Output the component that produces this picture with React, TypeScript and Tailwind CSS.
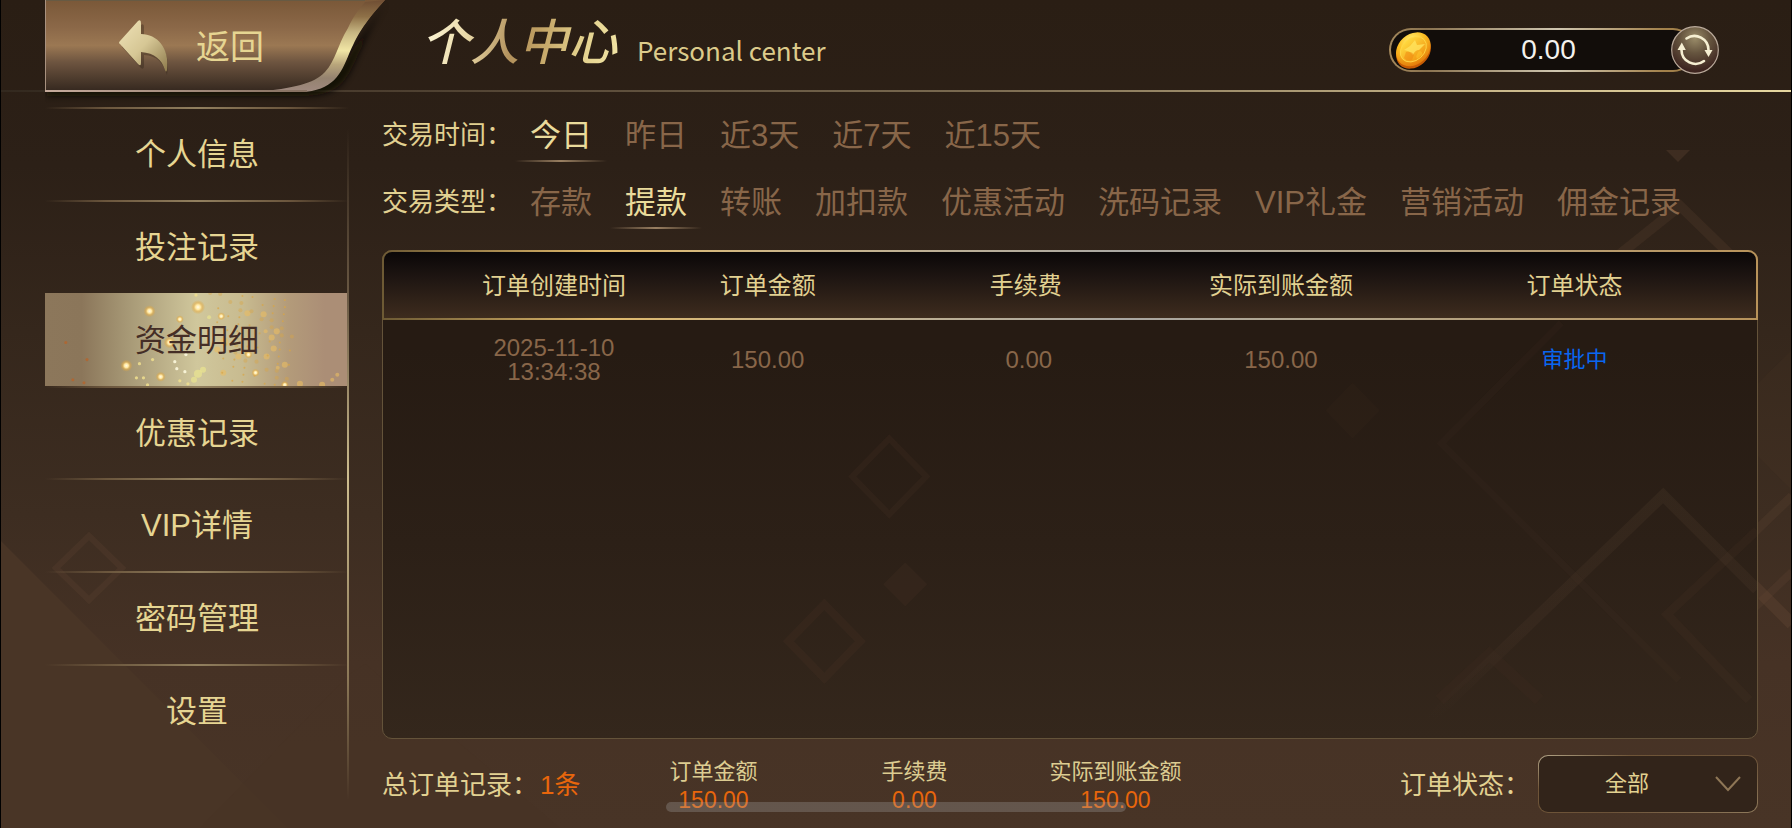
import React, { useState } from "react";

const CJK = "font-['Liberation_Sans','Noto_Sans_CJK_SC',sans-serif]";

const MENU = ["个人信息", "投注记录", "资金明细", "优惠记录", "VIP详情", "密码管理", "设置"];
const PERIODS = ["今日", "昨日", "近3天", "近7天", "近15天"];
const TYPES = ["存款", "提款", "转账", "加扣款", "优惠活动", "洗码记录", "VIP礼金", "营销活动", "佣金记录"];
const TOTALS = [
  { label: "订单金额", value: "150.00" },
  { label: "手续费", value: "0.00" },
  { label: "实际到账金额", value: "150.00" },
];

function Backdrop() {
  return (
    <svg
      className="pointer-events-none absolute inset-0 h-full w-full"
      viewBox="0 0 1792 828"
      preserveAspectRatio="xMidYMid slice"
      aria-hidden="true"
    >
      <path d="M0 540 L170 710 L288 828 H0 Z" fill="#493526" />
      <path d="M365 664 L350 674 L200 828 H560 Z" fill="#493526" opacity="0.35" />
      <g fill="none" stroke="#6b4b38" strokeOpacity="0.2">
        <path d="M89 536 L122 568 L89 600 L56 568 Z" strokeWidth="6" />
        <path d="M1600 270 L1680 206 L1748 272" strokeWidth="10" />
        <path d="M1664 496 L1792 624" strokeWidth="12" strokeOpacity="0.3" />
        <path d="M1792 496 L1740 546" strokeWidth="9" />
        <path d="M1792 572 L1752 610" strokeWidth="8" />
      </g>
      <g fill="#6b4b38">
        <path d="M1666 150 H1690 L1678 162 Z" opacity="0.3" />
        <path d="M1792 350 L1720 420 L1792 490 Z" opacity="0.08" />
      </g>
    </svg>
  );
}

function Watermark() {
  return (
    <svg className="pointer-events-none absolute inset-0 h-full w-full" viewBox="0 0 1376 488" preserveAspectRatio="xMidYMid slice" aria-hidden="true">
      <defs>
        <linearGradient id="peak" x1="0" y1="245" x2="0" y2="470" gradientUnits="userSpaceOnUse">
          <stop offset="0" stopColor="#5f4a35" stopOpacity="0.18" />
          <stop offset="0.6" stopColor="#5f4535" stopOpacity="0.14" />
          <stop offset="1" stopColor="#5f4535" stopOpacity="0" />
        </linearGradient>
      </defs>
      <path d="M1048 470 L1282 245 L1376 339" fill="none" stroke="url(#peak)" strokeWidth="11" />
      <g fill="none" stroke="#5f4535" strokeOpacity="0.12">
        <path d="M507 188 L544 226 L507 264 L470 226 Z" strokeWidth="6" />
        <path d="M442 354 L478 391 L442 428 L406 391 Z" strokeWidth="8" />
        <path d="M1376 280 L1286 364 L1368 450" strokeWidth="9" strokeOpacity="0.1" />
        <path d="M1180 72 L1060 193 L1298 430" strokeWidth="7" strokeOpacity="0.08" />
        <path d="M1058 450 L1108 404 L1158 450" strokeWidth="12" strokeOpacity="0.06" />
      </g>
      <g fill="#5f4535">
        <path d="M523 312 L545 334 L523 356 L501 334 Z" opacity="0.12" />
        <path d="M971 132 L998 160 L971 188 L944 160 Z" opacity="0.06" />
      </g>
    </svg>
  );
}

function BackButton() {
  return (
    <button type="button" className="relative flex h-[92px] w-[340px] shrink-0 items-center text-[#e6d592]">
      <svg className="absolute left-0 top-0 h-[104px] w-[344px]" viewBox="0 0 344 104" aria-hidden="true">
        <defs>
          <linearGradient id="plate" x1="0" y1="0" x2="0" y2="1">
            <stop offset="0" stopColor="#7a5838" />
            <stop offset="0.3" stopColor="#8b6848" />
            <stop offset="0.5" stopColor="#9b7853" />
            <stop offset="0.68" stopColor="#6e5540" />
            <stop offset="1" stopColor="#35281f" />
          </linearGradient>
          <linearGradient id="ribbon" x1="0" y1="0" x2="0" y2="1">
            <stop offset="0" stopColor="#6f4d33" />
            <stop offset="0.18" stopColor="#8e7047" />
            <stop offset="0.35" stopColor="#c6b581" />
            <stop offset="0.55" stopColor="#f1e6a5" />
            <stop offset="0.7" stopColor="#b9a67b" />
            <stop offset="0.85" stopColor="#94826f" />
            <stop offset="1" stopColor="#a08a80" />
          </linearGradient>
          <linearGradient id="rim" x1="0" y1="0" x2="1" y2="0">
            <stop offset="0" stopColor="#c5aa9c" />
            <stop offset="1" stopColor="#857060" />
          </linearGradient>
          <filter id="soft" x="-5%" y="-10%" width="115%" height="130%">
            <feGaussianBlur stdDeviation="3" />
          </filter>
        </defs>
        <path d="M2 80 H262 C292 78 300 64 309 48 L342 2 C322 32 318 46 306 70 C296 90 282 96 258 96 H2 Z" fill="#0d0806" opacity="0.8" filter="url(#soft)" />
        <path d="M0 0 H340 C318 24 310 38 302 56 C294 76 286 88 258 91 H0 Z" fill="url(#plate)" />
        <path d="M340 0 C318 24 312 36 304 54 C296 74 288 91 256 92 H210 C250 88 268 84 280 72 C291 60 292 46 303 28 C308 17 314 9 320 2 Z" fill="url(#ribbon)" />
        <rect x="0" y="0" width="320" height="1" fill="#675a43" />
        <rect x="0" y="0" width="1" height="92" fill="#a8917f" />
        <rect x="0" y="90" width="262" height="2" fill="url(#rim)" />
      </svg>
      <svg className="relative ml-[72px] mt-1 h-[60px] w-[54px]" viewBox="0 0 54 60" aria-hidden="true">
        <defs>
          <linearGradient id="arrow" x1="0" y1="0" x2="1" y2="1">
            <stop offset="0" stopColor="#efe3b8" />
            <stop offset="0.5" stopColor="#d6c795" />
            <stop offset="1" stopColor="#8e7a4c" />
          </linearGradient>
        </defs>
        <path d="M5 29 L24 7 Q27 5 27 9 V20 C44 20 54 36 50 57 C46 44 40 38 27 37 V48 Q27 52 24 50 Z" fill="#2c1f14" opacity="0.35" />
        <path d="M3 26 Q1 25 3 23 L21 3 Q24 1 24 5 V16 C40 16 53 30 50 52 Q49 55 48 52 C45 42 38 35 24 34 V45 Q24 49 21 46 Z" fill="url(#arrow)" />
      </svg>
      <span className="relative ml-[25px] pt-0.5 text-[34px] leading-10">返回</span>
    </button>
  );
}

function Coin() {
  return (
    <svg className="ml-1 size-[38px] shrink-0" viewBox="0 0 38 38" aria-hidden="true">
      <defs>
        <radialGradient id="coin" cx="0.6" cy="0.25" r="0.8">
          <stop offset="0" stopColor="#fff27a" />
          <stop offset="0.45" stopColor="#fcc024" />
          <stop offset="1" stopColor="#e27608" />
        </radialGradient>
        <linearGradient id="coinFace" x1="0" y1="0" x2="0" y2="1">
          <stop offset="0" stopColor="#ffd93f" />
          <stop offset="1" stopColor="#f29a14" />
        </linearGradient>
      </defs>
      <g transform="rotate(-42 19 19)">
        <ellipse cx="17.5" cy="20" rx="19" ry="15" fill="#c65b05" />
        <ellipse cx="19" cy="18" rx="19" ry="15" fill="url(#coin)" />
        <ellipse cx="19" cy="18" rx="14.5" ry="11" fill="url(#coinFace)" stroke="#ffd94a" strokeWidth="0.8" />
      </g>
      <path d="M20 9 L22 14 L30 13 L24 19 Q20 19 18 24 Q15 20 9 19 L15 15 Z" fill="#ffe45e" opacity="0.8" />
      <path d="M11 21 Q17 20 19 24 L17 29 Q12 31 9 27 Z" fill="#ee7a0a" opacity="0.4" />
      <path d="M24 20 Q28 20 27 24 L22 28 Q20 25 24 20 Z" fill="#ffca2e" opacity="0.5" />
    </svg>
  );
}

function RefreshIcon() {
  return (
    <svg className="size-12" viewBox="0 0 48 48" aria-hidden="true">
      <defs>
        <radialGradient id="knob" cx="0.5" cy="0.25" r="0.7">
          <stop offset="0" stopColor="#9a8c69" />
          <stop offset="0.45" stopColor="#66553f" />
          <stop offset="1" stopColor="#3d241f" />
        </radialGradient>
      </defs>
      <circle cx="24" cy="24" r="23.3" fill="url(#knob)" stroke="#b9a99a" strokeWidth="1.2" />
      <g fill="none" stroke="#f6efd2" strokeWidth="2.6" strokeLinecap="round">
        <path d="M15.5 12.5 A14 14 0 0 1 37.5 24" />
        <path d="M33 35 A14 14 0 0 1 10.5 24" />
      </g>
      <path d="M33.5 24 H41.5 L37.5 31 Z" fill="#f6efd2" />
      <path d="M6.5 24 H14.8 L10.8 16.5 Z" fill="#f6efd2" />
    </svg>
  );
}

const GLOWS = [
  [105, 18, 6], [153, 14, 7], [82, 72, 6], [135, 26, 4], [176, 23, 4],
  [116, 83, 5], [210, 79, 4], [239, 91, 4], [125, 49, 6], [203, 61, 4],
];
const BLURS = [
  [202, 20, 3], [218, 21, 3], [231, 38, 3], [226, 44, 3], [220, 38, 2], [153, 80, 4], [149, 86, 3], [158, 76, 3],
  [239, 71, 3], [254, 90, 3], [276, 91, 3], [286, 86, 2], [291, 81, 2], [178, 79, 3], [164, 24, 2], [228, 55, 3],
  [221, 63, 3], [193, 63, 3], [179, 48, 4], [172, 56, 3], [232, 74, 2],
];
const SPECKS = Array.from({ length: 64 }, (_, i) => [
  165 + ((i * 37) % 76) + Math.floor(i / 6),
  (i * 53) % 92,
  i % 3 === 0 ? 2 : 1,
]);
const EMBERS = [[22, 49], [43, 66], [29, 86], [40, 89]];
const LIGHTS = [[132, 75], [140, 78], [141, 61], [130, 68], [108, 66], [95, 70], [99, 84], [103, 91], [135, 87], [143, 90], [151, 2], [92, 84]];

function Sparkles() {
  return (
    <svg className="absolute inset-0 h-full w-full" viewBox="0 0 304 92" preserveAspectRatio="xMidYMid slice" aria-hidden="true">
      <defs>
        <radialGradient id="glow">
          <stop offset="0" stopColor="#fffbe8" />
          <stop offset="0.35" stopColor="#ffe7a0" />
          <stop offset="0.65" stopColor="#e8b04a" stopOpacity="0.55" />
          <stop offset="1" stopColor="#e0a030" stopOpacity="0" />
        </radialGradient>
      </defs>
      {BLURS.map(([x, y, r], i) => (
        <circle key={i} cx={x} cy={y} r={r} fill={x < 170 ? "#efe98d" : "#e9bd62"} opacity="0.6" />
      ))}
      {SPECKS.map(([x, y, r], i) => (
        <circle key={i} cx={x} cy={y} r={r} fill="#d9a544" opacity={r === 2 ? 0.4 : 0.7} />
      ))}
      {LIGHTS.map(([x, y], i) => (
        <circle key={i} cx={x} cy={y} r="1.6" fill={i < 4 ? "#fffbe0" : "#f0df8e"} opacity="0.85" />
      ))}
      {EMBERS.map(([x, y], i) => (
        <circle key={i} cx={x} cy={y} r="1.5" fill="#b5642c" opacity="0.8" />
      ))}
      {GLOWS.map(([x, y, r], i) => (
        <circle key={i} cx={x} cy={y} r={r} fill="url(#glow)" />
      ))}
    </svg>
  );
}

function FilterRow({ label, options, initial }: { label: string; options: string[]; initial: string }) {
  const [active, setActive] = useState(initial);
  return (
    <div className="flex items-center">
      <span className="shrink-0 pt-px text-[26px] leading-[53px] text-[#e2d191]">{label}</span>
      <div className="ml-[3px] flex gap-[3px]">
        {options.map((o) => (
          <button
            key={o}
            type="button"
            aria-pressed={o === active}
            onClick={() => setActive(o)}
            className={`h-[54px] whitespace-nowrap bg-bottom bg-no-repeat px-[15px] pt-0.5 text-[31px] leading-[52px] ${
              o === active
                ? "bg-[linear-gradient(90deg,transparent,#9a8062_50%,transparent)] bg-[length:100%_2px] text-[#eadb9b]"
                : "text-[#886649]"
            }`}
          >
            {o}
          </button>
        ))}
      </div>
    </div>
  );
}

export default function App() {
  const [menu, setMenu] = useState("资金明细");
  return (
    <div
      className={`relative flex min-h-screen flex-col overflow-hidden border-x border-black bg-[linear-gradient(180deg,#2a1e14_0%,#2c2017_20%,#35271c_40%,#3d2d21_62%,#463225_80%,#483426_100%)] ${CJK}`}
    >
      <Backdrop />

      <header className="relative flex h-[92px] items-center bg-[linear-gradient(90deg,#33291f_0%,#4d3f30_22%,#7b6b51_55%,#cdbb8d_85%,#e6d7a0_100%)] bg-[length:100%_2px] bg-bottom bg-no-repeat pl-11">
        <BackButton />
        <h1 className="-mt-3.5 ml-9 bg-[linear-gradient(100deg,#fdf6d6_4%,#e9d9a8_24%,#b2915c_46%,#c0a063_58%,#e2cf8b_78%,#f3e6a8_100%)] bg-clip-text pr-1 font-['Noto_Sans_CJK_SC',sans-serif] text-[49px] font-medium italic leading-[60px] text-transparent">
          个人中心
        </h1>
        <p className="ml-4 mt-2 font-['Noto_Sans_CJK_SC',sans-serif] text-[26px] leading-10 text-[#dccb8b]">Personal center</p>
        <div className="ml-auto mr-[72px] mt-2 flex items-center">
          <div className="flex h-11 w-[306px] items-center rounded-full border-2 border-transparent pr-6 [background:linear-gradient(#120d0a,#120d0a)_padding-box,linear-gradient(90deg,#a5895c,#8a7350_12%,#cfc6b0_55%,#a2804a_90%)_border-box]">
            <Coin />
            <output className="flex-1 pr-[5px] text-center text-[28px] leading-10 text-[#f4f2ee]">0.00</output>
          </div>
          <button type="button" aria-label="刷新" className="-ml-6 size-12 rounded-full">
            <RefreshIcon />
          </button>
        </div>
      </header>

      <div className="relative flex flex-1">
        <nav className="relative ml-11 flex w-[304px] shrink-0 flex-col pb-[71px] pt-[15px]">
          <div className="absolute bottom-7 right-0 top-9 z-10 w-0.5 bg-[linear-gradient(180deg,transparent,#695843_25%,#cdbd8f_52%,#8b7857_82%,transparent)]" />
          {MENU.map((m) => (
            <button
              key={m}
              type="button"
              onClick={() => setMenu(m)}
              className={`relative flex-1 bg-no-repeat pt-[3px] text-[31px] leading-10 ${
                m === menu
                  ? "bg-[linear-gradient(90deg,#8c775b_0%,#8b765a_12%,#a89a77_28%,#d0c79c_50%,#c8bb90_65%,#b39b7a_80%,#ab8e76_92%,#ab8e76_100%)] text-[#452e26]"
                  : "bg-[linear-gradient(90deg,transparent,#6b563d_20%,#92805f_50%,#6b563d_80%,transparent)] bg-[length:100%_2px] bg-top text-[#e6d592]"
              }`}
            >
              {m === menu && <Sparkles />}
              <span className="relative">{m}</span>
            </button>
          ))}
        </nav>

        <main className="flex min-w-0 flex-1 flex-col px-[33px] pt-4">
          <div className="flex flex-col gap-[13px]">
            <FilterRow label="交易时间：" options={PERIODS} initial="今日" />
            <FilterRow label="交易类型：" options={TYPES} initial="提款" />
          </div>

          <section className="relative mt-[21px] flex-1 rounded-[10px] border border-[#64533a] bg-[linear-gradient(180deg,#261b13_20%,#2c2017_60%,#34271c_100%)]">
            <div className="absolute -inset-x-px -top-px h-[70px] rounded-t-[10px] border-2 border-transparent [background:linear-gradient(180deg,#0a0707,#1c1411_35%,#3e2c1e)_padding-box,linear-gradient(90deg,#6d5a34,#e0b96b_16%,#c9b48a_30%,#a9a7a2_54%,#b3a68c_70%,#b8935a)_border-box]" />
            <Watermark />
            <table className="relative w-full table-fixed border-collapse text-center">
              <colgroup>
                <col className="w-[20%]" />
                <col className="w-[16%]" />
                <col className="w-[22%]" />
                <col className="w-[15%]" />
                <col className="w-[27%]" />
              </colgroup>
              <thead>
                <tr className="h-[69px] text-2xl leading-8 text-[#e2d191]">
                  <th className="pl-[67px] font-normal">订单创建时间</th>
                  <th className="font-normal">订单金额</th>
                  <th className="pr-1.5 font-normal">手续费</th>
                  <th className="pr-1 font-normal">实际到账金额</th>
                  <th className="pl-1.5 font-normal">订单状态</th>
                </tr>
              </thead>
              <tbody>
                <tr className="h-[79px] text-2xl leading-6 text-[#886649]">
                  <td className="pl-[67px]">
                    2025-11-10
                    <br />
                    13:34:38
                  </td>
                  <td>150.00</td>
                  <td>0.00</td>
                  <td className="pr-1">150.00</td>
                  <td className="pl-1.5 text-[22px] text-[#0a66f0]">审批中</td>
                </tr>
              </tbody>
            </table>
          </section>

          <footer className="flex h-[89px] items-center">
            <p className="pt-0.5 text-[26px] leading-8 text-[#e2d191]">
              总订单记录：<span className="ml-0.5 text-[#e8660c]">1条</span>
            </p>
            <dl className="ml-[66px] flex gap-[67px] pt-1">
              {TOTALS.map((t) => (
                <div key={t.label} className="w-[134px] whitespace-nowrap text-center text-[22px] leading-7">
                  <dt className="text-[#dccc91]">{t.label}</dt>
                  <dd className="text-[23px] text-[#e8660c]">{t.value}</dd>
                </div>
              ))}
            </dl>
            <label htmlFor="order-status" className="ml-auto pt-0.5 text-[26px] leading-8 text-[#e2d191]">
              订单状态：
            </label>
            <div className="relative ml-2 h-[58px] w-[220px] rounded-[10px] border border-transparent [background:linear-gradient(#32241a,#32241a)_padding-box,linear-gradient(160deg,#b3a588,#6f5538_25%,#6b5238_60%,#8f7a5c)_border-box]">
              <select
                id="order-status"
                defaultValue="全部"
                className="h-full w-full appearance-none rounded-[10px] bg-transparent pr-[42px] text-[22px] leading-8 text-[#e2d191] outline-none [text-align-last:center]"
              >
                <option>全部</option>
                <option>审批中</option>
              </select>
              <svg className="pointer-events-none absolute right-[15px] top-5 h-4 w-7" viewBox="0 0 28 16" fill="none" stroke="#8e7656" strokeWidth="2" aria-hidden="true">
                <path d="M2 1 L14 14 L26 1" />
              </svg>
            </div>
          </footer>
        </main>
      </div>

      <div className="pointer-events-none absolute bottom-4 left-[665px] h-2.5 w-[460px] rounded-full bg-[#a6a6a6]/30" />
    </div>
  );
}
